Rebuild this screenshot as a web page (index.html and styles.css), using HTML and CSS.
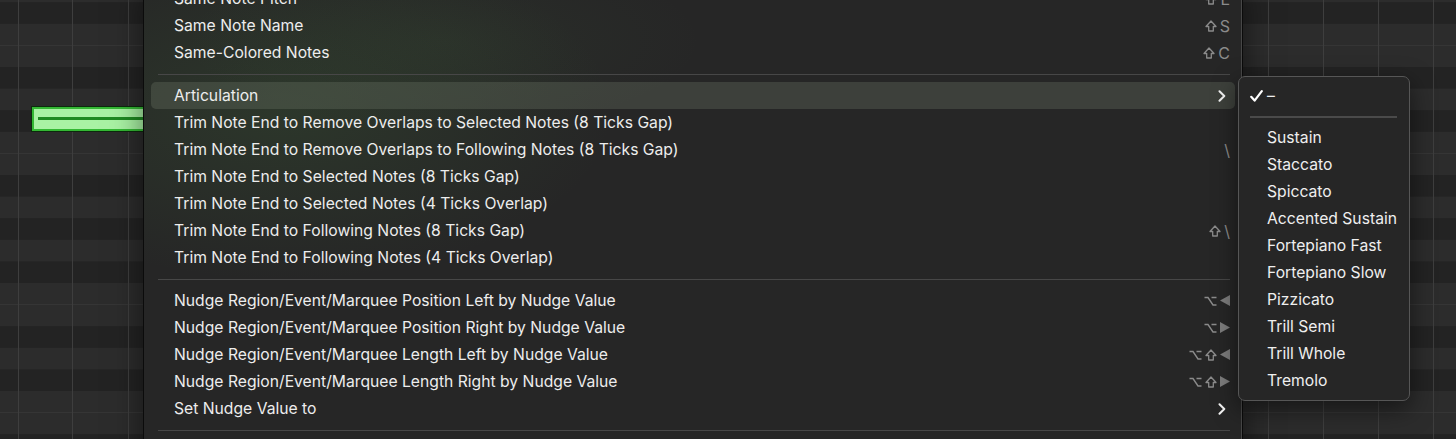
FILE: index.html
```html
<!DOCTYPE html>
<html>
<head>
<meta charset="utf-8">
<link rel="stylesheet" href="styles.css">
</head>
<body>
<div class="stage">
  <svg class="grid" width="1456" height="439" viewBox="0 0 1456 439">
    <rect x="0" y="0" width="1456" height="439" fill="#2c2c2c"/>
    <g fill="#232323">
      <rect x="0" y="2.2" width="1456" height="21.6"/>
      <rect x="0" y="67" width="1456" height="21.6"/>
      <rect x="0" y="110.2" width="1456" height="21.6"/>
      <rect x="0" y="175" width="1456" height="21.6"/>
      <rect x="0" y="218.2" width="1456" height="21.6"/>
      <rect x="0" y="261.4" width="1456" height="21.6"/>
      <rect x="0" y="326.2" width="1456" height="21.6"/>
      <rect x="0" y="369.4" width="1456" height="21.6"/>
      <rect x="0" y="434.2" width="1456" height="21.6"/>
    </g>
    <g fill="#353535">
      <rect x="0" y="45" width="1456" height="1"/>
      <rect x="0" y="153" width="1456" height="1"/>
      <rect x="0" y="304" width="1456" height="1"/>
      <rect x="0" y="412" width="1456" height="1"/>
    </g>
    <g fill="#3e3e3e">
      <rect x="18" y="0" width="1" height="439"/>
      <rect x="72" y="0" width="1" height="439"/>
      <rect x="128" y="0" width="1" height="439"/>
      <rect x="1268" y="0" width="1" height="439"/>
      <rect x="1323" y="0" width="1" height="439"/>
      <rect x="1378" y="0" width="1" height="439"/>
      <rect x="1433" y="0" width="1" height="439"/>
    </g>
  </svg>

  <div class="note"><span class="note-line"></span></div>

  <div class="menu">
    <div class="item"><span class="label">Same Note Pitch</span><span class="key"><svg class="shift" viewBox="0 0 12 12"><path d="M6 1 L11 6.5 H8.3 V11 H3.7 V6.5 H1 Z"/></svg>E</span></div>
    <div class="item"><span class="label">Same Note Name</span><span class="key"><svg class="shift" viewBox="0 0 12 12"><path d="M6 1 L11 6.5 H8.3 V11 H3.7 V6.5 H1 Z"/></svg>S</span></div>
    <div class="item"><span class="label">Same-Colored Notes</span><span class="key"><svg class="shift" viewBox="0 0 12 12"><path d="M6 1 L11 6.5 H8.3 V11 H3.7 V6.5 H1 Z"/></svg>C</span></div>
    <div class="sep"></div>
    <div class="item active"><span class="label">Articulation</span><svg class="chev" viewBox="0 0 8 12"><path d="M1.5 1.2 L6.3 6 L1.5 10.8"/></svg></div>
    <div class="item"><span class="label">Trim Note End to Remove Overlaps to Selected Notes (8 Ticks Gap)</span></div>
    <div class="item"><span class="label">Trim Note End to Remove Overlaps to Following Notes (8 Ticks Gap)</span><span class="key">\</span></div>
    <div class="item"><span class="label">Trim Note End to Selected Notes (8 Ticks Gap)</span></div>
    <div class="item"><span class="label">Trim Note End to Selected Notes (4 Ticks Overlap)</span></div>
    <div class="item"><span class="label">Trim Note End to Following Notes (8 Ticks Gap)</span><span class="key"><svg class="shift" viewBox="0 0 12 12"><path d="M6 1 L11 6.5 H8.3 V11 H3.7 V6.5 H1 Z"/></svg>\</span></div>
    <div class="item"><span class="label">Trim Note End to Following Notes (4 Ticks Overlap)</span></div>
    <div class="sep"></div>
    <div class="item"><span class="label">Nudge Region/Event/Marquee Position Left by Nudge Value</span><span class="key"><svg class="opt" viewBox="0 0 13 12"><path d="M0.5 2.5 H4 L9 10 H12.5 M7.5 2.5 H12.5"/></svg><svg class="tri" viewBox="0 0 10 11"><path d="M0 5.5 L10 0 V11 Z"/></svg></span></div>
    <div class="item"><span class="label">Nudge Region/Event/Marquee Position Right by Nudge Value</span><span class="key"><svg class="opt" viewBox="0 0 13 12"><path d="M0.5 2.5 H4 L9 10 H12.5 M7.5 2.5 H12.5"/></svg><svg class="tri" viewBox="0 0 10 11"><path d="M10 5.5 L0 0 V11 Z"/></svg></span></div>
    <div class="item"><span class="label">Nudge Region/Event/Marquee Length Left by Nudge Value</span><span class="key"><svg class="opt" viewBox="0 0 13 12"><path d="M0.5 2.5 H4 L9 10 H12.5 M7.5 2.5 H12.5"/></svg><svg class="shift" viewBox="0 0 12 12"><path d="M6 1 L11 6.5 H8.3 V11 H3.7 V6.5 H1 Z"/></svg><svg class="tri" viewBox="0 0 10 11"><path d="M0 5.5 L10 0 V11 Z"/></svg></span></div>
    <div class="item"><span class="label">Nudge Region/Event/Marquee Length Right by Nudge Value</span><span class="key"><svg class="opt" viewBox="0 0 13 12"><path d="M0.5 2.5 H4 L9 10 H12.5 M7.5 2.5 H12.5"/></svg><svg class="shift" viewBox="0 0 12 12"><path d="M6 1 L11 6.5 H8.3 V11 H3.7 V6.5 H1 Z"/></svg><svg class="tri" viewBox="0 0 10 11"><path d="M10 5.5 L0 0 V11 Z"/></svg></span></div>
    <div class="item"><span class="label">Set Nudge Value to</span><svg class="chev" viewBox="0 0 8 12"><path d="M1.5 1.2 L6.3 6 L1.5 10.8"/></svg></div>
    <div class="sep"></div>
    <div class="item"><span class="label">&nbsp;</span></div>
  </div>

  <div class="submenu">
    <div class="sitem"><span class="check"><svg viewBox="0 0 13 12"><path d="M1.2 6.8 L4.6 10.6 L11.8 1.2"/></svg></span><span>–</span></div>
    <div class="ssep"></div>
    <div class="sitem"><span class="check"></span><span>Sustain</span></div>
    <div class="sitem"><span class="check"></span><span>Staccato</span></div>
    <div class="sitem"><span class="check"></span><span>Spiccato</span></div>
    <div class="sitem"><span class="check"></span><span>Accented Sustain</span></div>
    <div class="sitem"><span class="check"></span><span>Fortepiano Fast</span></div>
    <div class="sitem"><span class="check"></span><span>Fortepiano Slow</span></div>
    <div class="sitem"><span class="check"></span><span>Pizzicato</span></div>
    <div class="sitem"><span class="check"></span><span>Trill Semi</span></div>
    <div class="sitem"><span class="check"></span><span>Trill Whole</span></div>
    <div class="sitem"><span class="check"></span><span>Tremolo</span></div>
  </div>
</div>
</body>
</html>
```

FILE: styles.css
```css
* { box-sizing: border-box; }
html, body {
  margin: 0;
  padding: 0;
  background: #2c2c2c;
  overflow: hidden;
}
body {
  font-family: Inter, "Noto Sans", "Liberation Sans", sans-serif;
  font-size: 15.7px;
  color: #ededed;
}
.stage {
  position: relative;
  width: 1456px;
  height: 439px;
  overflow: hidden;
}
.grid {
  display: block;
}

.note {
  position: absolute;
  left: 32px;
  top: 107px;
  width: 130px;
  height: 24px;
  background: #a9f2a4;
  border: 2px solid #34b834;
  box-shadow: 0 0 0 1px #0d2a0d;
}
.note-line {
  position: absolute;
  left: 4px;
  right: 0;
  top: 8px;
  height: 3px;
  background: #1f8a22;
}

.menu {
  position: absolute;
  left: 143px;
  top: -21px;
  width: 1100px;
  height: 480px;
  padding: 5px 0;
  background:
    radial-gradient(ellipse 330px 170px at 140px 131px, rgba(80, 150, 70, 0.15), rgba(80, 150, 70, 0) 100%),
    radial-gradient(ellipse 260px 90px at 300px 61px, rgba(90, 150, 80, 0.07), rgba(90, 150, 80, 0) 100%),
    #262626;
  border: 1px solid #0b0b0b;
  box-shadow: inset -1px 0 0 #474747, 0 10px 30px rgba(0, 0, 0, 0.5);
}
.item {
  display: flex;
  align-items: center;
  justify-content: space-between;
  height: 27px;
  margin: 0 7px;
  padding: 0 5px 0 23px;
  border-radius: 5px;
  white-space: nowrap;
}
.item.active {
  background: rgba(110, 118, 104, 0.33);
}
.key {
  display: flex;
  align-items: center;
  gap: 3px;
  color: #8b8b8b;
  font-size: 16px;
}
.shift {
  width: 12px;
  height: 12px;
  fill: none;
  stroke: #8b8b8b;
  stroke-width: 1.3;
  stroke-linejoin: round;
}
.opt {
  width: 13px;
  height: 12px;
  fill: none;
  stroke: #8b8b8b;
  stroke-width: 1.4;
}
.tri {
  width: 10px;
  height: 11px;
  fill: #7c7c7c;
}
.chev {
  width: 8px;
  height: 12px;
  margin-right: 4px;
  fill: none;
  stroke: #f2f2f2;
  stroke-width: 2;
  stroke-linecap: round;
  stroke-linejoin: round;
}
.sep {
  height: 16px;
  margin: 0 12px 0 14px;
  display: flex;
  align-items: center;
}
.sep::before {
  content: "";
  display: block;
  width: 100%;
  height: 1px;
  background: #474747;
}

.submenu {
  position: absolute;
  left: 1238px;
  top: 76px;
  width: 172px;
  height: 325px;
  padding: 5px 0;
  background: #262626;
  border: 1px solid #565656;
  border-radius: 7px;
  box-shadow: 0 8px 24px rgba(0, 0, 0, 0.5);
}
.sitem {
  display: flex;
  align-items: center;
  height: 27px;
  padding-left: 11px;
  white-space: nowrap;
  color: #efefef;
}
.check {
  display: flex;
  align-items: center;
  width: 17px;
  flex: none;
}
.check svg {
  width: 13px;
  height: 12px;
  fill: none;
  stroke: #ffffff;
  stroke-width: 2.2;
  stroke-linecap: round;
  stroke-linejoin: round;
}
.ssep {
  height: 15px;
  margin: 0 12px 0 11px;
  display: flex;
  align-items: center;
}
.ssep::before {
  content: "";
  display: block;
  width: 100%;
  height: 2px;
  background: #4a4a4a;
}
```
